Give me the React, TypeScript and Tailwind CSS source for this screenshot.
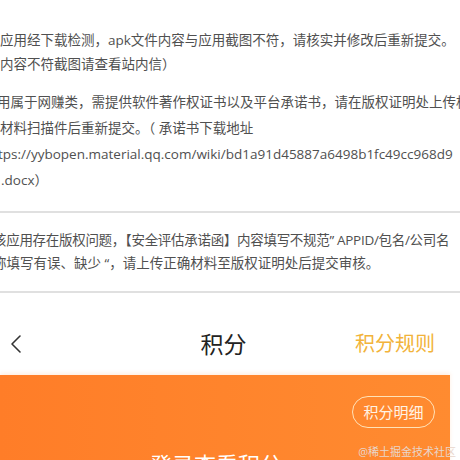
import React from 'react';

const FONT = { fontFamily: '"Open Sans", "Noto Sans CJK SC", sans-serif' };

export default function App() {
  return (
    <div className="relative w-[460px] h-[460px] overflow-hidden bg-white" style={FONT}>
      {/* review notes */}
      <div className="pt-[28px] text-[13.5px] text-[#505050] whitespace-nowrap">
        <div className="leading-[24px]">
          <div>应用经下载检测，apk文件内容与应用截图不符，请核实并修改后重新提交。</div>
          <div>内容不符截图请查看站内信）</div>
        </div>
        <div className="mt-[13px] leading-[26px]">
          <div className="ml-[-3px]">用属于网赚类，需提供软件著作权证书以及平台承诺书，请在版权证明处上传相</div>
          <div>材料扫描件后重新提交。（ 承诺书下载地址</div>
          <div className="ml-[-2px]">tps://yybopen.material.qq.com/wiki/bd1a91d45887a6498b1fc49cc968d9</div>
          <div className="ml-[1px]">.docx）</div>
        </div>
        <div className="mt-[18px] h-[2px] bg-[#e0e0e0]" />
        <div className="pt-[16px] pb-[16px] leading-[23px]">
          <div className="ml-[-7px] tracking-[-0.3px]">该应用存在版权问题，【安全评估承诺函】内容填写不规范” APPID/包名/公司名</div>
          <div className="ml-[-7px]">称填写有误、缺少 “，请上传正确材料至版权证明处后提交审核。</div>
        </div>
        <div className="h-[2px] bg-[#e0e0e0]" />
      </div>

      {/* nav bar */}
      <div className="mt-[26px] h-[50px] w-[450px] flex items-center justify-between pl-[10px] pr-[15px]">
        <svg width="12" height="20" viewBox="0 0 12 20" fill="none">
          <polyline points="10,2 2,10 10,18" stroke="#333" strokeWidth="1.6" strokeLinecap="round" strokeLinejoin="round" />
        </svg>
        <div className="text-[23px] text-[#222] ml-[70px]">积分</div>
        <div className="text-[20px] text-[#f2b33a]">积分规则</div>
      </div>

      {/* points card */}
      <div className="mt-[6px] w-[450px] h-[120px] bg-gradient-to-r from-[#ff7d28] to-[#ff8b30] shadow-[0_-2px_4px_rgba(255,140,60,0.15)]">
        <div className="flex justify-end pt-[21px] pr-[15px]">
          <div className="h-[32px] w-[83px] rounded-full border-[1.5px] border-[#ffe2b8] flex items-center justify-center text-[15px] text-[#fff4e6]">
            积分明细
          </div>
        </div>
        <div className="mt-[20px] pl-[150px] text-[22px] text-white leading-[32px]">登录查看积分</div>
      </div>

      <div className="absolute right-[4px] bottom-[3px] text-[11px] text-[#e8d6cc] leading-none">@稀土掘金技术社区</div>
    </div>
  );
}
